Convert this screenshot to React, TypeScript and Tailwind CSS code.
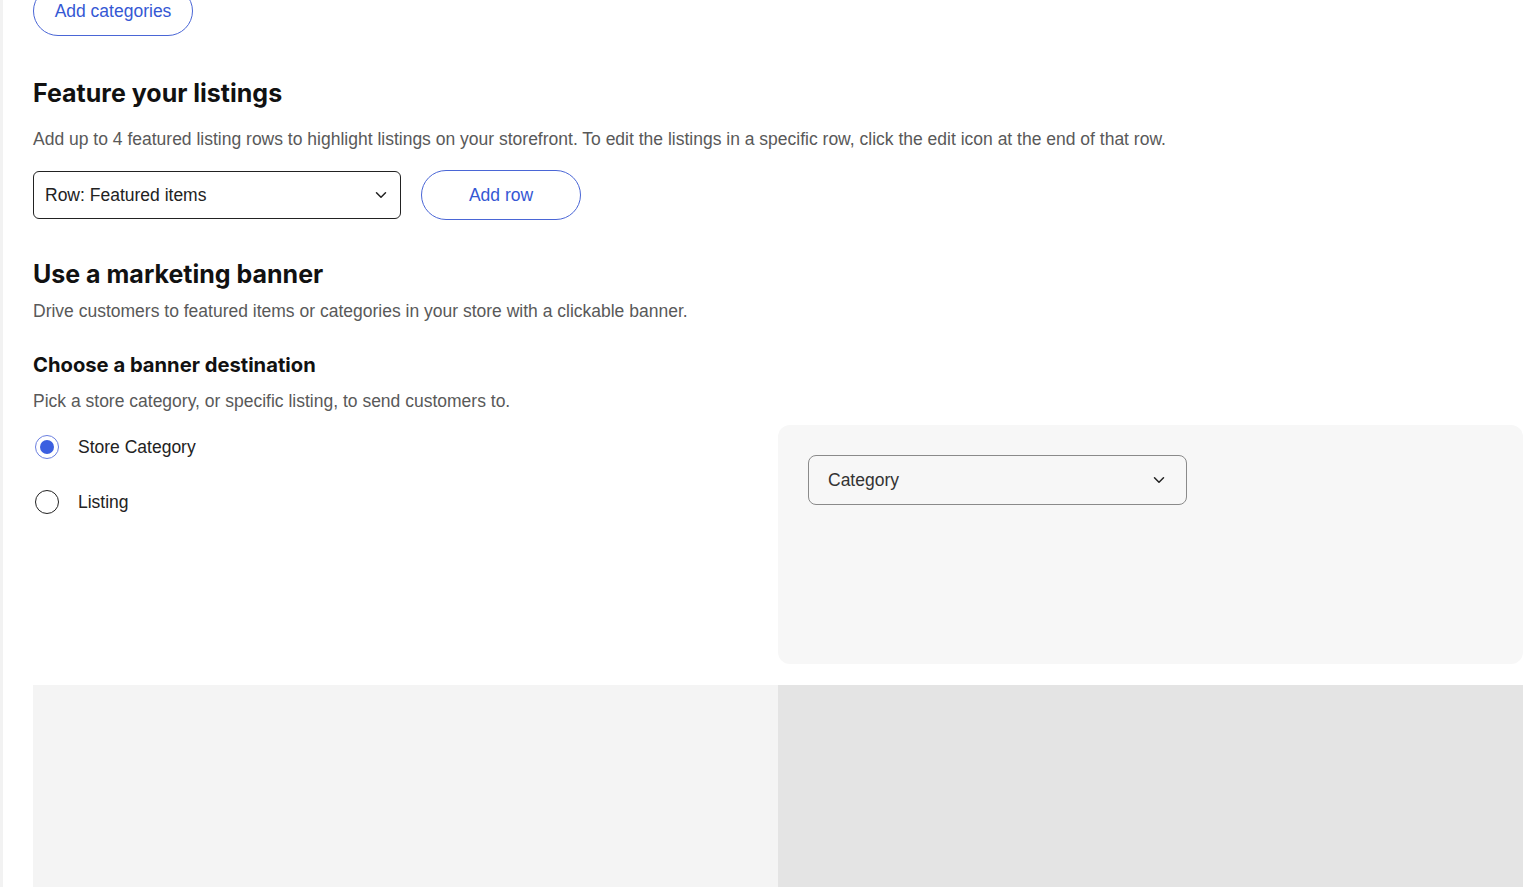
import React from "react";

const heading = { fontFamily: "Inter, 'Noto Sans', sans-serif" };

function Chevron({ className }: { className?: string }) {
  return (
    <svg viewBox="0 0 24 24" className={className} fill="none" stroke="currentColor" strokeWidth={2} strokeLinecap="round" strokeLinejoin="round">
      <path d="M6 9l6 6 6-6" />
    </svg>
  );
}

export default function App() {
  return (
    <div className="min-h-[887px] w-[1540px] overflow-hidden bg-white" style={{ fontFamily: "'Liberation Sans', Arial, sans-serif" }}>
      <div className="flex min-h-[887px]">
        <div className="w-[3px] shrink-0 bg-[#f2f2f2]" />
        <div className="w-[1490px] pl-[30px] box-content">
          <div className="-mt-[14px]">
            <button className="h-[50px] w-[160px] rounded-full border border-[#4a66d6] text-[17.5px] text-[#3558d4]">
              Add categories
            </button>
          </div>

          <h2 className="mt-[41px] text-[25px] leading-[32px] font-bold text-[#111]" style={heading}>
            Feature your listings
          </h2>
          <p className="mt-[18px] text-[17.5px] leading-[24px] text-[#595959]">
            Add up to 4 featured listing rows to highlight listings on your storefront. To edit the listings in a specific row, click the edit icon at the end of that row.
          </p>
          <div className="mt-[19px] flex items-center gap-[20px]">
            <div className="flex h-[48px] w-[368px] items-center justify-between rounded-[6px] border border-[#222] pl-[11px] pr-[10px] text-[17.5px] text-[#222]">
              <span>Row: Featured items</span>
              <Chevron className="h-[18px] w-[18px] text-[#222]" />
            </div>
            <button className="h-[50px] w-[160px] rounded-full border border-[#4a66d6] text-[17.5px] text-[#3558d4]">
              Add row
            </button>
          </div>

          <h2 className="mt-[38px] text-[25px] leading-[32px] font-bold text-[#111]" style={heading}>
            Use a marketing banner
          </h2>
          <p className="mt-[9px] text-[17.5px] leading-[24px] text-[#595959]">
            Drive customers to featured items or categories in your store with a clickable banner.
          </p>
          <h3 className="mt-[28px] text-[20.2px] leading-[28px] font-bold text-[#111]" style={heading}>
            Choose a banner destination
          </h3>
          <p className="mt-[10px] text-[17.5px] leading-[24px] text-[#595959]">
            Pick a store category, or specific listing, to send customers to.
          </p>

          <div className="mt-[12px] grid grid-cols-2">
            <div className="pt-[10px] flex flex-col gap-[31px]">
              <label className="flex h-[24px] items-center gap-[19px] text-[17.5px] text-[#222]">
                <span className="ml-[2px] flex h-[24px] w-[24px] items-center justify-center rounded-full border border-[#6b7fe0] bg-white">
                  <span className="h-[14px] w-[14px] rounded-full bg-[#3b5fe0]" />
                </span>
                Store Category
              </label>
              <label className="flex h-[24px] items-center gap-[19px] text-[17.5px] text-[#222]">
                <span className="ml-[2px] h-[24px] w-[24px] rounded-full border-[1.5px] border-[#222] bg-white" />
                Listing
              </label>
            </div>
            <div className="h-[239px] rounded-[12px] bg-[#f7f7f7] pl-[30px] pt-[30px]">
              <div className="flex h-[50px] w-[379px] items-center justify-between rounded-[8px] border border-[#8a8a8a] pl-[19px] pr-[18px] text-[17.5px] text-[#333]">
                <span>Category</span>
                <Chevron className="h-[18px] w-[18px] text-[#222]" />
              </div>
            </div>
          </div>

          <div className="mt-[21px] grid grid-cols-2">
            <div className="h-[300px] bg-[#f4f4f4]" />
            <div className="h-[300px] bg-[#e4e4e4]" />
          </div>
        </div>
      </div>
    </div>
  );
}
